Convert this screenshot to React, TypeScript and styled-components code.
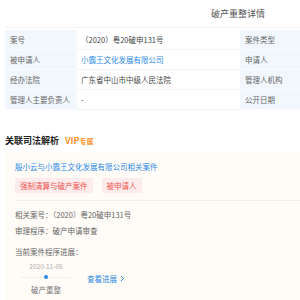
import React from 'react';
import styled, { createGlobalStyle } from 'styled-components';

const GlobalStyle = createGlobalStyle`
  body {
    margin: 0;
    background: #ffffff;
    overflow: hidden;
    font-family: "Noto Sans CJK SC", "Noto Sans", sans-serif;
  }
`;

const Viewport = styled.div`
  width: 100vw;
  height: 100vh;
  overflow: hidden;
`;

const Page = styled.div`
  width: 466px;
  padding-left: 5px;
  color: #333;
`;

const TitleBar = styled.div`
  height: 27px;
  display: flex;
  align-items: center;
  justify-content: center;
  font-size: 9px;
  color: #555;
  border-bottom: 1px solid #f4f4f4;
  margin-bottom: 2px;
`;

const InfoTable = styled.div`
  display: grid;
  grid-template-columns: 72px 163px 72px 159px;
  grid-auto-rows: 20px;
  font-size: 7.5px;
`;

const LabelCell = styled.div`
  background: #f2f7fd;
  color: #666;
  display: flex;
  align-items: center;
  padding-left: 5px;
  border-bottom: 1px solid #fafcff;
`;

const ValueCell = styled.div<{ $link?: boolean }>`
  display: flex;
  align-items: center;
  padding-left: 4px;
  color: ${p => (p.$link ? '#2b8ae6' : '#444')};
  border-bottom: 1px solid #f3f3f3;
`;

const SectionHead = styled.div`
  margin-top: 22px;
  height: 17px;
  display: flex;
  align-items: center;
  gap: 6px;
  font-size: 9px;
  font-weight: bold;
  color: #222;
`;

const Vip = styled.span`
  color: #f7901e;
  font-weight: bold;
  font-size: 9px;
  i {
    font-style: normal;
    font-size: 7px;
  }
`;

const Card = styled.div`
  margin-top: 3px;
  background: #fffbf7;
  padding: 0 10px;
  min-height: 160px;
`;

const CardHead = styled.div`
  padding: 9px 0 7px;
  border-bottom: 1px solid #f6eee6;
`;

const CaseLink = styled.div`
  font-size: 7.5px;
  line-height: 12px;
  color: #2b8ae6;
`;

const TagRow = styled.div`
  display: flex;
  gap: 9px;
  margin-top: 5px;
`;

const Tag = styled.span`
  height: 15px;
  padding: 0 5px;
  display: flex;
  align-items: center;
  background: #fdeceb;
  color: #ef5350;
  font-size: 7.5px;
`;

const CardBody = styled.div`
  padding-top: 8px;
`;

const Line = styled.div<{ $gap?: number }>`
  font-size: 7.5px;
  line-height: 12px;
  color: #666;
  margin-top: ${p => p.$gap ?? 0}px;
`;

const Progress = styled.div`
  display: flex;
  align-items: center;
  margin-top: 3px;
`;

const Timeline = styled.div`
  width: 62px;
  display: flex;
  flex-direction: column;
  align-items: center;
`;

const DateText = styled.div`
  font-size: 6.5px;
  color: #aaa;
  line-height: 10px;
`;

const Track = styled.div`
  width: 50px;
  height: 12px;
  display: flex;
  align-items: center;
  justify-content: center;
  background: linear-gradient(#f3efea, #f3efea) center / 100% 1px no-repeat;
`;

const Dot = styled.span`
  width: 4px;
  height: 4px;
  border-radius: 50%;
  background: #2b8ae6;
`;

const StageText = styled.div`
  font-size: 7.5px;
  color: #777;
  line-height: 14px;
`;

const MoreLink = styled.a`
  margin-left: 10px;
  margin-bottom: 2px;
  font-size: 7.5px;
  color: #2b8ae6;
  display: flex;
  align-items: center;
  gap: 3px;
`;

const rows: [string, string, string, boolean?][] = [
  ['案号', '（2020）粤20破申131号', '案件类型'],
  ['被申请人', '小霸王文化发展有限公司', '申请人', true],
  ['经办法院', '广东省中山市中级人民法院', '管理人机构'],
  ['管理人主要负责人', '-', '公开日期'],
];

const App: React.FC = () => {
  return (
    <Viewport>
      <GlobalStyle />
      <Page>
        <TitleBar>破产重整详情</TitleBar>
        <InfoTable>
          {rows.map(([label, value, right, link]) => (
            <React.Fragment key={label}>
              <LabelCell>{label}</LabelCell>
              <ValueCell $link={link}>{value}</ValueCell>
              <LabelCell>{right}</LabelCell>
              <ValueCell />
            </React.Fragment>
          ))}
        </InfoTable>
        <SectionHead>
          关联司法解析
          <Vip>VIP<i>专属</i></Vip>
        </SectionHead>
        <Card>
          <CardHead>
            <CaseLink>殷小云与小霸王文化发展有限公司相关案件</CaseLink>
            <TagRow>
              <Tag>强制清算与破产案件</Tag>
              <Tag>被申请人</Tag>
            </TagRow>
          </CardHead>
          <CardBody>
            <Line>相关案号：（2020）粤20破申131号</Line>
            <Line $gap={4}>审理程序：破产申请审查</Line>
            <Line $gap={9}>当前案件程序进展：</Line>
            <Progress>
              <Timeline>
                <DateText>2020-11-05</DateText>
                <Track><Dot /></Track>
                <StageText>破产重整</StageText>
              </Timeline>
              <MoreLink>
                查看进展
                <svg width="5" height="7" viewBox="0 0 5 7">
                  <path d="M1 1l2.5 2.5L1 6" fill="none" stroke="#2b8ae6" strokeWidth="1" />
                </svg>
              </MoreLink>
            </Progress>
          </CardBody>
        </Card>
      </Page>
    </Viewport>
  );
};

export default App;
